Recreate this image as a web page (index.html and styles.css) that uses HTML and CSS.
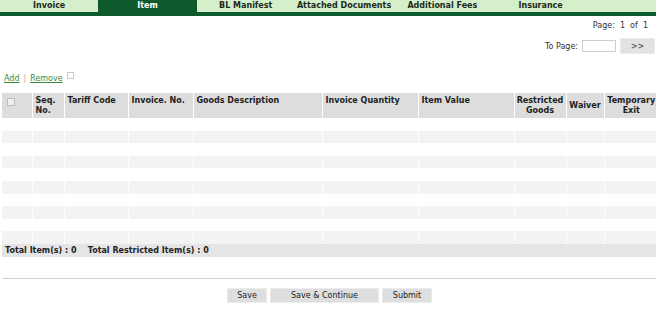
FILE: index.html
```html
<!DOCTYPE html>
<html>
<head>
    <title>Item</title>
    <link rel="stylesheet" href="styles.css">
</head>
<body>
    <div class="tabs">
        <div class="tab">Invoice</div>
        <div class="tab active">Item</div>
        <div class="tab">BL Manifest</div>
        <div class="tab">Attached Documents</div>
        <div class="tab">Additional Fees</div>
        <div class="tab">Insurance</div>
    </div>

    <div class="pager">
        <div class="page-info">Page:&nbsp;&nbsp;1&nbsp;&nbsp;of&nbsp;&nbsp;1</div>
        <div class="page-go">
            <label for="to-page">To Page:</label>
            <input type="text" id="to-page">
            <button class="go">&gt;&gt;</button>
        </div>
    </div>

    <div class="actions">
        <a href="#">Add</a>
        <span class="sep">|</span>
        <a href="#">Remove</a>
        <span class="mini-check"></span>
    </div>

    <div class="grid-wrap">
        <table class="grid">
            <colgroup>
                <col style="width:30px">
                <col style="width:32px">
                <col style="width:64px">
                <col style="width:65px">
                <col style="width:129px">
                <col style="width:96px">
                <col style="width:96px">
                <col style="width:52px">
                <col style="width:38px">
                <col style="width:54px">
            </colgroup>
            <thead>
                <tr>
                    <th class="chk"><span class="box"></span></th>
                    <th>Seq.<br>No.</th>
                    <th>Tariff Code</th>
                    <th>Invoice. No.</th>
                    <th>Goods Description</th>
                    <th>Invoice Quantity</th>
                    <th>Item Value</th>
                    <th class="center">Restricted<br>Goods</th>
                    <th class="center mid">Waiver</th>
                    <th class="center">Temporary<br>Exit</th>
                </tr>
            </thead>
            <tbody>
                <tr><td></td><td></td><td></td><td></td><td></td><td></td><td></td><td></td><td></td><td></td></tr>
                <tr><td></td><td></td><td></td><td></td><td></td><td></td><td></td><td></td><td></td><td></td></tr>
                <tr><td></td><td></td><td></td><td></td><td></td><td></td><td></td><td></td><td></td><td></td></tr>
                <tr><td></td><td></td><td></td><td></td><td></td><td></td><td></td><td></td><td></td><td></td></tr>
                <tr><td></td><td></td><td></td><td></td><td></td><td></td><td></td><td></td><td></td><td></td></tr>
                <tr><td></td><td></td><td></td><td></td><td></td><td></td><td></td><td></td><td></td><td></td></tr>
                <tr><td></td><td></td><td></td><td></td><td></td><td></td><td></td><td></td><td></td><td></td></tr>
                <tr><td></td><td></td><td></td><td></td><td></td><td></td><td></td><td></td><td></td><td></td></tr>
                <tr><td></td><td></td><td></td><td></td><td></td><td></td><td></td><td></td><td></td><td></td></tr>
                <tr><td></td><td></td><td></td><td></td><td></td><td></td><td></td><td></td><td></td><td></td></tr>
            </tbody>
        </table>
        <div class="totals">Total Item(s) : 0&nbsp;&nbsp;&nbsp;&nbsp;Total Restricted Item(s) : 0</div>
    </div>

    <div class="footer">
        <button class="btn btn-save">Save</button>
        <button class="btn btn-cont">Save &amp; Continue</button>
        <button class="btn btn-submit">Submit</button>
    </div>
</body>
</html>
```

FILE: styles.css
```css
body {
    margin: 0;
    font-family: "DejaVu Sans", Verdana, sans-serif;
    font-size: 8px;
    color: #222;
    background-color: white;
    overflow: hidden;
}
.tabs {
    display: flex;
    height: 12px;
    background-color: #d6efcb;
    border-bottom: 4px solid #0e5a2c;
}
.tab {
    width: 98.3px;
    line-height: 12px;
    text-align: center;
    font-weight: bold;
    color: #1c2a1c;
}
.tab.active {
    background-color: #0e5a2c;
    color: white;
}
.pager {
    display: flex;
    flex-direction: column;
    align-items: flex-end;
    padding: 4px 1px 0 0;
}
.page-info {
    margin-right: 7px;
    line-height: 12px;
    color: #333;
}
.page-go {
    display: flex;
    align-items: center;
    margin-top: 6px;
}
.page-go label {
    color: #333;
    margin-right: 4px;
}
.page-go input {
    width: 34px;
    height: 12px;
    padding: 0;
    border: 1px solid #cfcfcf;
    box-sizing: border-box;
    margin: 0 4px 0 0;
}
.go {
    width: 35px;
    height: 16px;
    padding: 0;
    border: 1px solid #ececec;
    background-color: #e2e2e2;
    font-family: inherit;
    font-size: 8px;
    color: #333;
}
.actions {
    display: flex;
    align-items: center;
    height: 10px;
    margin: 19px 0 0 4px;
}
.actions a {
    color: #3e8a3e;
    text-decoration: underline;
}
.sep {
    color: #aaa;
    margin: 0 4px;
}
.mini-check {
    width: 5px;
    height: 5px;
    border: 1px solid #c8c8c8;
    margin: -5px 0 0 4px;
}
.grid-wrap {
    margin: 10px 0 0 2px;
    width: 656px;
}
.grid {
    border-collapse: collapse;
    table-layout: fixed;
    width: 656px;
}
.grid th {
    background-color: #dddddd;
    text-align: left;
    vertical-align: top;
    font-weight: bold;
    line-height: 10px;
    padding: 3px 0 2px 3px;
    border-left: 1px solid white;
    color: #222;
    white-space: nowrap;
}
.grid th:first-child {
    border-left: none;
}
.grid th.center {
    text-align: center;
    padding-left: 0;
}
.grid th.mid {
    vertical-align: middle;
}
.grid th.chk {
    padding: 5px 0 0 5px;
}
.box {
    display: block;
    width: 6px;
    height: 6px;
    border: 1px solid #bdbdbd;
    background-color: #eee;
}
.grid td {
    height: 12.6px;
    padding: 0;
    border-left: 1px solid white;
}
.grid td:first-child {
    border-left: none;
}
.grid tbody tr:nth-child(even) td {
    background-color: #f3f3f3;
}
.totals {
    background-color: #e5e5e5;
    font-weight: bold;
    line-height: 13px;
    padding-left: 3px;
    color: #222;
}
.footer {
    margin: 21px 0 0 3px;
    border-top: 1px solid #d0d0d0;
    padding-top: 9px;
    display: flex;
    justify-content: center;
    gap: 3px;
}
.btn {
    height: 15px;
    padding: 0;
    border: 1px solid #ececec;
    background-color: #dedede;
    font-family: inherit;
    font-size: 8px;
    color: #222;
}
.btn-save { width: 40px; }
.btn-cont { width: 109px; }
.btn-submit { width: 50px; }
```
